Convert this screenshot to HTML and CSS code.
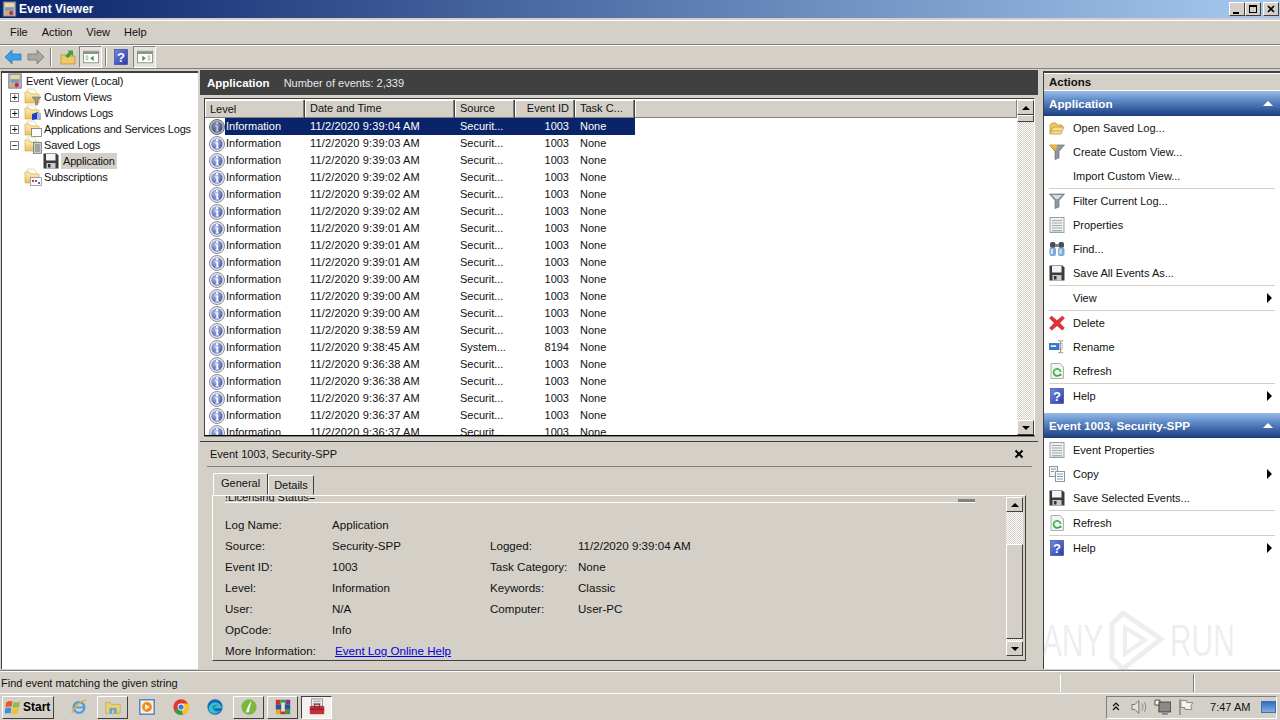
FILE: index.html
```html
<!DOCTYPE html>
<html lang="en">
<head>
    <meta charset="UTF-8">
    <title>Event Viewer</title>
    <link rel="stylesheet" href="styles.css">
</head>
<body>
<svg class="defs" width="0" height="0">
    <defs>
        <radialGradient id="g-info" cx="0.4" cy="0.35" r="0.7"><stop offset="0" stop-color="#b9c6ee"/><stop offset="1" stop-color="#3f55a8"/></radialGradient>
        <linearGradient id="g-folder" x1="0" y1="0" x2="0" y2="1"><stop offset="0" stop-color="#fff3b8"/><stop offset="1" stop-color="#e8bf5c"/></linearGradient>
        <linearGradient id="g-help" x1="0" y1="0" x2="1" y2="1"><stop offset="0" stop-color="#6f88e4"/><stop offset="1" stop-color="#2a3ca4"/></linearGradient>

        <symbol id="i-info" viewBox="0 0 16 16">
            <circle cx="8" cy="8" r="7.5" fill="#e8e8ec" stroke="#8a8e98"/>
            <circle cx="8" cy="8" r="5.6" fill="url(#g-info)"/>
            <rect x="7" y="3.2" width="2.2" height="2" fill="#fff"/>
            <path d="M6.4 6.4h2.8v5h1v1.2H6.4v-1.2h1v-3.8h-1z" fill="#fff"/>
        </symbol>
        <symbol id="i-floppy" viewBox="0 0 16 16">
            <path d="M0.5 0.5h13l2 2v13h-15z" fill="#3b3b3b"/>
            <rect x="3" y="1" width="9.5" height="6.5" fill="#f4f4f4"/>
            <rect x="3.5" y="10" width="9" height="5.5" fill="#c9c9c9"/>
            <rect x="5" y="11" width="2.5" height="3.5" fill="#333"/>
        </symbol>
        <symbol id="i-folder" viewBox="0 0 18 18">
            <path d="M3 1h7l2 2v6H3z" fill="#fbfaf2" stroke="#d6cfa8" stroke-width="0.6"/>
            <path d="M1 15V4h4l1 2h9v9z" fill="url(#g-folder)" stroke="#d2ab52" stroke-width="0.7"/>
        </symbol>
        <symbol id="i-root" viewBox="0 0 16 18">
            <rect x="1" y="1" width="14" height="16" fill="#b4bccb" stroke="#6b7488"/>
            <rect x="3" y="2.500" width="10" height="4" fill="#f0dc90"/>
            <path d="M3 8h10M3 10h10" stroke="#5d76a8"/>
            <rect x="3" y="11.500" width="4" height="4" fill="#d8b050"/>
            <circle cx="10" cy="13.500" r="2.500" fill="#c8303c"/>
        </symbol>
        <symbol id="i-funnel" viewBox="0 0 16 16">
            <path d="M0.5 1h15L10 7.5V14l-4 1.5V7.5z" fill="#8d99a8" stroke="#5c6670" stroke-width="0.6"/>
            <path d="M3 2h10L9 6H7z" fill="#d7dee6"/>
        </symbol>
        <symbol id="i-funnel-new" viewBox="0 0 16 16">
            <path d="M0.5 1h15L10 7.5V14l-4 1.5V7.5z" fill="#8d99a8" stroke="#5c6670" stroke-width="0.6"/>
            <path d="M0.5 1h8L7 6.5 4.5 5z" fill="#f8b616"/>
        </symbol>
        <symbol id="i-props" viewBox="0 0 16 16">
            <rect x="1" y="0.5" width="14" height="15" fill="#eef0f2" stroke="#9aa0a8"/>
            <path d="M3 3.500h10M3 6h10M3 8.500h10M3 11h10" stroke="#a4aab2"/>
            <rect x="3" y="13" width="10" height="1.500" fill="#8fc0a0"/>
        </symbol>
        <symbol id="i-find" viewBox="0 0 16 16">
            <rect x="1" y="1" width="5.500" height="6" rx="2" fill="#4a4f5a"/>
            <rect x="9.500" y="1" width="5.500" height="6" rx="2" fill="#4a4f5a"/>
            <rect x="6" y="3" width="4" height="3" fill="#7b808a"/>
            <rect x="0.500" y="6.500" width="6.500" height="8.500" rx="2" fill="#7fa9d6"/>
            <rect x="9" y="6.500" width="6.500" height="8.500" rx="2" fill="#7fa9d6"/>
            <rect x="2" y="8" width="2" height="5" fill="#d6e4f2"/>
            <rect x="10.500" y="8" width="2" height="5" fill="#d6e4f2"/>
        </symbol>
        <symbol id="i-delete" viewBox="0 0 16 16">
            <path d="M2.500 1L8 5.500 13.500 1 15.500 3.200 10.800 8l4.700 5-2.200 2.200L8 10.800 2.800 15.200.5 13l4.800-5L.5 3.200z" fill="#e2303a" stroke="#b41c26" stroke-width="0.4"/>
        </symbol>
        <symbol id="i-rename" viewBox="0 0 18 16">
            <rect x="0.500" y="4" width="11" height="7" fill="#2f78d0" stroke="#1f4f90" stroke-width="0.6"/>
            <rect x="2" y="6" width="6" height="2" fill="#e8f0fa"/>
            <rect x="11.500" y="4" width="3.500" height="7" fill="#fff" stroke="#9a9a9a" stroke-width="0.5"/>
            <path d="M10.500 1h2l.7.7.7-.7h2M13.200 1.500v12.500M10.500 14.500h2l.7-.7.7.7h2" fill="none" stroke="#8a7358"/>
        </symbol>
        <symbol id="i-refresh" viewBox="0 0 16 16">
            <path d="M2 .5h9l3.500 3.500v11.500H2z" fill="#f3f5f3" stroke="#a8b0a8"/>
            <path d="M10.600 11.800A3.500 3.500 0 1 1 11.600 9" fill="none" stroke="#3db04e" stroke-width="1.700"/>
            <path d="M12.800 13l-3.800-.2 2.800-2.800z" fill="#3db04e"/>
        </symbol>
        <symbol id="i-help" viewBox="0 0 16 16">
            <rect x="1.500" y="0.500" width="13" height="15" fill="url(#g-help)" stroke="#2a3c98" stroke-width="0.6"/>
            <text x="8" y="13" class="help-mark" text-anchor="middle">?</text>
        </symbol>
        <symbol id="i-copy" viewBox="0 0 16 16">
            <rect x="0.500" y="0.500" width="8" height="10" fill="#f2f4f6" stroke="#8f959c"/>
            <rect x="6.500" y="5.500" width="9" height="10" fill="#fff" stroke="#8f959c"/>
            <path d="M2 3h5M2 5.500h3M8 8h6M8 10.500h6M8 13h6" stroke="#7f9ab8"/>
        </symbol>
        <symbol id="i-open" viewBox="0 0 16 16">
            <path d="M1 14V5l2-2h4l1 2h5v2" fill="#f0c868" stroke="#b98a2c" stroke-width="0.7"/>
            <path d="M1 14l3-7h11l-3 7z" fill="#f8dc90" stroke="#b98a2c" stroke-width="0.7"/>
            <path d="M3 11h9" stroke="#d3a44a"/>
        </symbol>
    </defs>
</svg>

<div class="window">
    <header class="titlebar">
        <svg class="title-ico"><use href="#i-root"/></svg>
        <span class="title-text">Event Viewer</span>
        <div class="win-btns">
            <button class="win-btn"><span class="glyph-min"></span></button>
            <button class="win-btn"><span class="glyph-restore"></span></button>
            <button class="win-btn win-close"><svg class="glyph-x" viewBox="0 0 8 8"><path d="M1 1l6 6M7 1L1 7" stroke="#000" stroke-width="1.600"/></svg></button>
        </div>
    </header>

    <nav class="menubar">
        <span>File</span><span>Action</span><span>View</span><span>Help</span>
    </nav>

    <div class="toolbar">
        <svg class="tool-arrow" viewBox="0 0 18 16"><path d="M1 8l7-7v4h9v6H8v4z" fill="#3aa0e8" stroke="#2a78c0" stroke-width="0.8"/></svg>
        <svg class="tool-arrow" viewBox="0 0 18 16"><path d="M17 8l-7-7v4H1v6h9v4z" fill="#a8a8a0" stroke="#77776f" stroke-width="0.8"/></svg>
        <i class="tool-sep"></i>
        <svg class="tool-ico tool-up" viewBox="0 0 16 16"><path d="M1 15V6h5l1 1h8v8z" fill="#f0c868" stroke="#b98a2c" stroke-width="0.7"/><path d="M5 7l4-4-1.500-1.500H13v5.500l-1.500-1.500-3.500 3.500z" fill="#3f9f3a"/></svg>
        <span class="tool-toggle"><svg class="tool-ico" viewBox="0 0 18 16"><rect x="0.500" y="1.500" width="17" height="13" fill="#fff" stroke="#8a8a8a"/><rect x="1" y="2" width="16" height="2.500" fill="#8a8a8a"/><path d="M3 7h3M3 9h3M3 11h3" stroke="#7fa77f"/><path d="M12 6.500v6l-4-3z" fill="#3f9f3a"/></svg></span>
        <i class="tool-sep"></i>
        <svg class="tool-ico tool-help"><use href="#i-help"/></svg>
        <span class="tool-toggle"><svg class="tool-ico" viewBox="0 0 18 16"><rect x="0.500" y="1.500" width="17" height="13" fill="#fff" stroke="#8a8a8a"/><rect x="1" y="2" width="16" height="2.500" fill="#8a8a8a"/><path d="M12 7h3M12 9h3M12 11h3" stroke="#7fa77f"/><path d="M6 6.500v6l4-3z" fill="#3f9f3a"/></svg></span>
    </div>

    <main class="workspace">
        <aside class="tree">
            <div class="tree-row tree-root">
                <svg class="root-ico"><use href="#i-root"/></svg>
                <span>Event Viewer (Local)</span>
            </div>
            <div class="tree-row"><i class="expander">+</i>
                <svg class="folder" viewBox="0 0 18 18"><use href="#i-folder" width="18" height="18"/><path d="M8 9h9l-3.500 4v4h-2v-4z" fill="#8f9a8a" stroke="#5f6a5a" stroke-width="0.5"/></svg>
                <span>Custom Views</span></div>
            <div class="tree-row"><i class="expander">+</i>
                <svg class="folder" viewBox="0 0 18 18"><use href="#i-folder" width="18" height="18"/><path d="M8 10l6-2v7l-6 1z" fill="#1a3fc8"/><rect x="13" y="9" width="4" height="7" fill="#a8b4d0"/></svg>
                <span>Windows Logs</span></div>
            <div class="tree-row"><i class="expander">+</i>
                <svg class="folder" viewBox="0 0 18 18"><use href="#i-folder" width="18" height="18"/><rect x="7.500" y="8.500" width="10" height="8" fill="#fbfbfb" stroke="#77787c" stroke-width="0.8"/></svg>
                <span>Applications and Services Logs</span></div>
            <div class="tree-row"><i class="expander">−</i>
                <svg class="folder" viewBox="0 0 18 18"><use href="#i-folder" width="18" height="18"/><rect x="9.500" y="6.500" width="8" height="11" fill="#c8cacc" stroke="#77787c" stroke-width="0.8"/><path d="M11 9h5M11 11h5M11 13h5M11 15h5" stroke="#7a7c80"/></svg>
                <span>Saved Logs</span></div>
            <div class="tree-row tree-leaf">
                <svg class="ico"><use href="#i-floppy"/></svg>
                <span class="tree-current">Application</span>
            </div>
            <div class="tree-row tree-sub">
                <svg class="folder" viewBox="0 0 18 18"><use href="#i-folder" width="18" height="18"/><rect x="6.500" y="9.500" width="11" height="8" fill="#fbfbfb" stroke="#9090a8" stroke-width="0.8"/><rect x="8" y="12" width="2" height="2" fill="#c83a3a"/><rect x="11" y="12" width="2" height="2" fill="#4a6ad0"/><rect x="14" y="14" width="2" height="2" fill="#4a6ad0"/></svg>
                <span>Subscriptions</span></div>
        </aside>

        <section class="center">
            <div class="log-head"><b>Application</b><span>Number of events: 2,339</span></div>

            <div class="events">
                <div class="events-main">
                    <div class="grid-head">
                        <span class="col-level">Level</span>
                        <span class="col-date">Date and Time</span>
                        <span class="col-source">Source</span>
                        <span class="col-id">Event ID</span>
                        <span class="col-task">Task C...</span>
                        <span class="col-rest"></span>
                    </div>
                    <div class="grid-body">
                        <div class="event selected"><div class="col-level"><svg class="ico"><use href="#i-info"/></svg><span>Information</span></div><span class="col-date">11/2/2020 9:39:04 AM</span><span class="col-source">Securit...</span><span class="col-id">1003</span><span class="col-task">None</span></div>
                        <div class="event"><div class="col-level"><svg class="ico"><use href="#i-info"/></svg><span>Information</span></div><span class="col-date">11/2/2020 9:39:03 AM</span><span class="col-source">Securit...</span><span class="col-id">1003</span><span class="col-task">None</span></div>
                        <div class="event"><div class="col-level"><svg class="ico"><use href="#i-info"/></svg><span>Information</span></div><span class="col-date">11/2/2020 9:39:03 AM</span><span class="col-source">Securit...</span><span class="col-id">1003</span><span class="col-task">None</span></div>
                        <div class="event"><div class="col-level"><svg class="ico"><use href="#i-info"/></svg><span>Information</span></div><span class="col-date">11/2/2020 9:39:02 AM</span><span class="col-source">Securit...</span><span class="col-id">1003</span><span class="col-task">None</span></div>
                        <div class="event"><div class="col-level"><svg class="ico"><use href="#i-info"/></svg><span>Information</span></div><span class="col-date">11/2/2020 9:39:02 AM</span><span class="col-source">Securit...</span><span class="col-id">1003</span><span class="col-task">None</span></div>
                        <div class="event"><div class="col-level"><svg class="ico"><use href="#i-info"/></svg><span>Information</span></div><span class="col-date">11/2/2020 9:39:02 AM</span><span class="col-source">Securit...</span><span class="col-id">1003</span><span class="col-task">None</span></div>
                        <div class="event"><div class="col-level"><svg class="ico"><use href="#i-info"/></svg><span>Information</span></div><span class="col-date">11/2/2020 9:39:01 AM</span><span class="col-source">Securit...</span><span class="col-id">1003</span><span class="col-task">None</span></div>
                        <div class="event"><div class="col-level"><svg class="ico"><use href="#i-info"/></svg><span>Information</span></div><span class="col-date">11/2/2020 9:39:01 AM</span><span class="col-source">Securit...</span><span class="col-id">1003</span><span class="col-task">None</span></div>
                        <div class="event"><div class="col-level"><svg class="ico"><use href="#i-info"/></svg><span>Information</span></div><span class="col-date">11/2/2020 9:39:01 AM</span><span class="col-source">Securit...</span><span class="col-id">1003</span><span class="col-task">None</span></div>
                        <div class="event"><div class="col-level"><svg class="ico"><use href="#i-info"/></svg><span>Information</span></div><span class="col-date">11/2/2020 9:39:00 AM</span><span class="col-source">Securit...</span><span class="col-id">1003</span><span class="col-task">None</span></div>
                        <div class="event"><div class="col-level"><svg class="ico"><use href="#i-info"/></svg><span>Information</span></div><span class="col-date">11/2/2020 9:39:00 AM</span><span class="col-source">Securit...</span><span class="col-id">1003</span><span class="col-task">None</span></div>
                        <div class="event"><div class="col-level"><svg class="ico"><use href="#i-info"/></svg><span>Information</span></div><span class="col-date">11/2/2020 9:39:00 AM</span><span class="col-source">Securit...</span><span class="col-id">1003</span><span class="col-task">None</span></div>
                        <div class="event"><div class="col-level"><svg class="ico"><use href="#i-info"/></svg><span>Information</span></div><span class="col-date">11/2/2020 9:38:59 AM</span><span class="col-source">Securit...</span><span class="col-id">1003</span><span class="col-task">None</span></div>
                        <div class="event"><div class="col-level"><svg class="ico"><use href="#i-info"/></svg><span>Information</span></div><span class="col-date">11/2/2020 9:38:45 AM</span><span class="col-source">System...</span><span class="col-id">8194</span><span class="col-task">None</span></div>
                        <div class="event"><div class="col-level"><svg class="ico"><use href="#i-info"/></svg><span>Information</span></div><span class="col-date">11/2/2020 9:36:38 AM</span><span class="col-source">Securit...</span><span class="col-id">1003</span><span class="col-task">None</span></div>
                        <div class="event"><div class="col-level"><svg class="ico"><use href="#i-info"/></svg><span>Information</span></div><span class="col-date">11/2/2020 9:36:38 AM</span><span class="col-source">Securit...</span><span class="col-id">1003</span><span class="col-task">None</span></div>
                        <div class="event"><div class="col-level"><svg class="ico"><use href="#i-info"/></svg><span>Information</span></div><span class="col-date">11/2/2020 9:36:37 AM</span><span class="col-source">Securit...</span><span class="col-id">1003</span><span class="col-task">None</span></div>
                        <div class="event"><div class="col-level"><svg class="ico"><use href="#i-info"/></svg><span>Information</span></div><span class="col-date">11/2/2020 9:36:37 AM</span><span class="col-source">Securit...</span><span class="col-id">1003</span><span class="col-task">None</span></div>
                        <div class="event"><div class="col-level"><svg class="ico"><use href="#i-info"/></svg><span>Information</span></div><span class="col-date">11/2/2020 9:36:37 AM</span><span class="col-source">Securit...</span><span class="col-id">1003</span><span class="col-task">None</span></div>
                    </div>
                </div>
                <div class="vscroll vscroll-events">
                    <button class="sb-btn"><i class="arrow-up"></i></button>
                    <div class="sb-thumb sb-thumb-small"></div>
                    <div class="sb-track"></div>
                    <button class="sb-btn"><i class="arrow-down"></i></button>
                </div>
            </div>

            <div class="detail">
                <div class="detail-head"><span>Event 1003, Security-SPP</span><svg class="detail-close" viewBox="0 0 10 10"><path d="M1.500 1.500l7 7M8.500 1.500l-7 7" stroke="#000" stroke-width="2"/></svg></div>
                <div class="tabs">
                    <span class="tab tab-active">General</span>
                    <span class="tab">Details</span>
                </div>
                <div class="tab-page">
                    <div class="tab-content">
                        <div class="desc-clip">
                            <span class="desc-text">!Licensing Status=</span>
                            <i class="desc-grip"></i>
                        </div>
                        <div class="fields">
                            <span>Log Name:</span><span class="span-3">Application</span>
                            <span>Source:</span><span>Security-SPP</span><span>Logged:</span><span>11/2/2020 9:39:04 AM</span>
                            <span>Event ID:</span><span>1003</span><span>Task Category:</span><span>None</span>
                            <span>Level:</span><span>Information</span><span>Keywords:</span><span>Classic</span>
                            <span>User:</span><span>N/A</span><span>Computer:</span><span>User-PC</span>
                            <span>OpCode:</span><span class="span-3">Info</span>
                            <span>More Information:</span><a class="span-3 help-link">Event Log Online Help</a>
                        </div>
                    </div>
                    <div class="vscroll vscroll-detail">
                        <button class="sb-btn"><i class="arrow-up"></i></button>
                        <div class="sb-track sb-track-top"></div>
                        <div class="sb-thumb sb-thumb-big"></div>
                        <div class="sb-track sb-track-end"></div>
                        <button class="sb-btn"><i class="arrow-down"></i></button>
                    </div>
                </div>
            </div>
        </section>

        <aside class="actions">
            <div class="actions-title">Actions</div>
            <div class="action-head"><span>Application</span><i class="collapse"></i></div>
            <div class="action"><svg class="ico"><use href="#i-open"/></svg><span>Open Saved Log...</span></div>
            <div class="action"><svg class="ico"><use href="#i-funnel-new"/></svg><span>Create Custom View...</span></div>
            <div class="action"><span class="no-ico">Import Custom View...</span></div>
            <hr class="action-sep">
            <div class="action"><svg class="ico"><use href="#i-funnel"/></svg><span>Filter Current Log...</span></div>
            <div class="action"><svg class="ico"><use href="#i-props"/></svg><span>Properties</span></div>
            <div class="action"><svg class="ico"><use href="#i-find"/></svg><span>Find...</span></div>
            <div class="action"><svg class="ico"><use href="#i-floppy"/></svg><span>Save All Events As...</span></div>
            <hr class="action-sep">
            <div class="action"><span class="no-ico">View</span><i class="more"></i></div>
            <hr class="action-sep">
            <div class="action"><svg class="ico"><use href="#i-delete"/></svg><span>Delete</span></div>
            <div class="action"><svg class="ico"><use href="#i-rename"/></svg><span>Rename</span></div>
            <div class="action"><svg class="ico"><use href="#i-refresh"/></svg><span>Refresh</span></div>
            <hr class="action-sep">
            <div class="action"><svg class="ico"><use href="#i-help"/></svg><span>Help</span><i class="more"></i></div>
            <div class="action-head action-head-second"><span>Event 1003, Security-SPP</span><i class="collapse"></i></div>
            <div class="action"><svg class="ico"><use href="#i-props"/></svg><span>Event Properties</span></div>
            <div class="action"><svg class="ico"><use href="#i-copy"/></svg><span>Copy</span><i class="more"></i></div>
            <div class="action"><svg class="ico"><use href="#i-floppy"/></svg><span>Save Selected Events...</span></div>
            <hr class="action-sep">
            <div class="action"><svg class="ico"><use href="#i-refresh"/></svg><span>Refresh</span></div>
            <hr class="action-sep">
            <div class="action"><svg class="ico"><use href="#i-help"/></svg><span>Help</span><i class="more"></i></div>
        </aside>
    </main>

    <footer class="statusbar">
        <span class="status-main">Find event matching the given string</span>
        <span class="status-cell status-mid"></span>
        <span class="status-cell status-end"></span>
    </footer>
</div>

<div class="taskbar">
    <button class="start">
        <svg class="start-logo" viewBox="0 0 16 16"><path d="M1 3.500C3 2 5 1.500 7.500 2.500L6.500 8C4.500 7 2.500 7.500 0.500 8.500z" fill="#e8582c"/><path d="M8.500 2.800c2 1 4 1 6.500-.3L14 8c-2.500 1-4.500 1-6.500.2z" fill="#8cc040"/><path d="M0.300 9.500c2-1 4-1.500 6-.5L5.500 14.500c-2-1-4-.5-6 .5z" fill="#3c8ce0"/><path d="M7.300 9.300c2 .8 4 .8 6.500-.2l-1 5.500c-2.500 1-4.500 1-6.500.2z" fill="#f0c028"/></svg>
        <span>Start</span>
    </button>
    <div class="quick">
        <span class="task"><svg viewBox="0 0 20 20"><circle cx="10" cy="10.500" r="6" fill="none" stroke="#4a9ce0" stroke-width="2.400"/><path d="M4 10.500h12" stroke="#4a9ce0" stroke-width="2"/><path d="M2 17C4 9 12 3 18 2" fill="none" stroke="#e8b030" stroke-width="1.400"/></svg></span>
        <span class="task task-up"><svg viewBox="0 0 20 20"><path d="M2 17V5h5l1 2h10v10z" fill="#f0d070" stroke="#b99a40" stroke-width="0.7"/><rect x="6" y="11" width="8" height="6" fill="#58a8d8"/><rect x="9" y="13" width="2" height="4" fill="#f0d070"/></svg></span>
        <span class="task"><svg viewBox="0 0 20 20"><rect x="2" y="2" width="16" height="16" fill="#fdf0d8" stroke="#3a78c8" stroke-width="1.400"/><circle cx="10" cy="10" r="5.500" fill="#f08a1c"/><path d="M8 7l5 3-5 3z" fill="#fff"/></svg></span>
        <span class="task"><svg viewBox="0 0 20 20"><circle cx="10" cy="10" r="8.500" fill="#e0392c"/><path d="M10 10L2.700 14.500A8.500 8.500 0 0 0 12 18.300z" fill="#2f9e44"/><path d="M10 10l2 8.300A8.500 8.500 0 0 0 18 6H10z" fill="#f7c51c"/><circle cx="10" cy="10" r="3.800" fill="#fff"/><circle cx="10" cy="10" r="2.900" fill="#3a78e0"/></svg></span>
        <span class="task"><svg viewBox="0 0 20 20"><circle cx="10" cy="10" r="8.500" fill="#1469b8"/><path d="M3 11C4 6 9 4 13 5.500c3 1 4.500 3.500 4.500 6H8c0 3 4 4.500 8 2.500-2 3-7 4.500-10 2.500C3.500 15 2.800 13 3 11z" fill="#36c0c8"/><path d="M7 10.500c1-3 5-4 8-2-3-1-5 0-6 2z" fill="#1469b8"/></svg></span>
        <span class="task task-up"><svg viewBox="0 0 20 20"><circle cx="10" cy="10" r="8.500" fill="#7cb840"/><path d="M13 3C9.500 7 8 11 6.500 16.500c3-1.500 6-1.500 8.500-1.500-2 0-3.500 0-5 .2C10.500 11 11.500 7 13 3z" fill="#fff"/></svg></span>
        <span class="task task-up"><svg viewBox="0 0 20 20"><rect x="2" y="2" width="5" height="5" fill="#c83030"/><rect x="7" y="2" width="6" height="5" fill="#2f9e44"/><rect x="13" y="2" width="5" height="5" fill="#8a2f90"/><rect x="2" y="7" width="16" height="6" fill="#2f4f9e"/><rect x="2" y="13" width="5" height="5" fill="#e0b020"/><rect x="7" y="13" width="6" height="5" fill="#c83030"/><rect x="13" y="13" width="5" height="5" fill="#2f9e44"/><rect x="8" y="5" width="4" height="10" fill="#f0e0c0"/></svg></span>
        <span class="task task-active"><svg viewBox="0 0 20 20"><rect x="4" y="1" width="12" height="8" fill="#f2f2f2" stroke="#8a8a90"/><path d="M6 3.500h8M6 6h8" stroke="#8a8a90"/><rect x="2" y="9" width="16" height="9" fill="#c0303a"/><rect x="7" y="7" width="6" height="3" fill="none" stroke="#801c24"/><rect x="2" y="12" width="16" height="1" fill="#801c24"/></svg></span>
    </div>
    <div class="tray">
        <svg class="tray-chevron" viewBox="0 0 8 10"><path d="M1 4l3-3 3 3M1 8l3-3 3 3" fill="none" stroke="#111" stroke-width="1.300"/></svg>
        <svg class="tray-ico" viewBox="0 0 18 16"><path d="M2 5.500h3l4-4v13l-4-4H2z" fill="#e6e4de" stroke="#77756e"/><path d="M12 4.500c1.500 2 1.500 5 0 7M14.500 3c2 3 2 7 0 10" fill="none" stroke="#8a8880"/></svg>
        <svg class="tray-ico" viewBox="0 0 18 16"><path d="M1 1h5v5H1z" fill="#fff" stroke="#444"/><rect x="5" y="3" width="12" height="10" fill="#8a8a88" stroke="#444"/><path d="M8 15h6" stroke="#444"/></svg>
        <svg class="tray-ico" viewBox="0 0 18 16"><path d="M3 0v16" stroke="#77756e" stroke-width="1.200"/><path d="M4 1.500h6v2h6l-2 4 1 3H8v-2H4z" fill="#f4f4f0" stroke="#8a8880"/></svg>
        <span class="tray-time">7:47 AM</span>
        <i class="show-desktop"></i>
    </div>
</div>

<div class="watermark">
    <span class="wm-word">ANY</span>
    <svg class="wm-play" viewBox="0 0 56 62"><path d="M3 14L14 3l38 26-38 30L3 48z" fill="none" stroke="currentColor" stroke-width="5"/><path d="M16 18l20 12-20 14z" fill="none" stroke="currentColor" stroke-width="4"/></svg>
    <span class="wm-word">RUN</span>
</div>
</body>
</html>
```

FILE: styles.css
```css
:root {
    --face: #d4d0c8;
    --light: #ffffff;
    --shadow: #808080;
    --dark: #404040;
    --navy: #0a246a;
    --ui-font: "Liberation Sans", Arial, sans-serif;
}

* {
    box-sizing: border-box;
}

html, body {
    margin: 0;
    height: 720px;
    overflow: hidden;
}

body {
    font-family: var(--ui-font);
    font-size: 11px;
    color: #111;
    background-color: var(--face);
    display: flex;
    flex-direction: column;
}

.defs {
    position: absolute;
}

.help-mark {
    font: bold 13px var(--ui-font);
    fill: #fff;
}

.ico {
    width: 16px;
    height: 16px;
    flex: none;
}

.window {
    flex: 1;
    min-height: 0;
    display: flex;
    flex-direction: column;
}

/* title bar */
.titlebar {
    height: 18px;
    display: flex;
    align-items: center;
    padding: 0 1px 0 2px;
    background: linear-gradient(to right, #0a246a, #a6caf0);
    color: #fff;
    font-size: 12px;
    font-weight: bold;
}

.title-ico {
    width: 15px;
    height: 16px;
    margin-right: 2px;
}

.title-text {
    flex: 1;
}

.win-btns {
    display: flex;
}

.win-btn {
    width: 16px;
    height: 14px;
    padding: 0;
    margin: 0;
    border: 1px solid;
    border-color: #fff #404040 #404040 #fff;
    background-color: var(--face);
    display: flex;
    align-items: center;
    justify-content: center;
}

.win-close {
    margin-left: 2px;
}

.glyph-x {
    width: 8px;
    height: 8px;
}

.glyph-min {
    width: 6px;
    height: 2px;
    margin-top: 7px;
    margin-right: 3px;
    background-color: #000;
}

.glyph-restore {
    width: 8px;
    height: 8px;
    border: 1px solid #000;
    border-top-width: 2px;
}

/* menu and toolbar */
.menubar {
    height: 25px;
    margin-top: 2px;
    padding-bottom: 2px;
    border-top: 1px solid var(--light);
    display: flex;
    align-items: center;
    gap: 14px;
    padding-left: 10px;
    border-bottom: 1px solid var(--shadow);
}

.toolbar {
    height: 24px;
    display: flex;
    align-items: center;
    padding-left: 4px;
    border-top: 1px solid var(--light);
    border-bottom: 1px solid var(--shadow);
}

.tool-arrow {
    width: 18px;
    height: 16px;
    margin-right: 5px;
}

.tool-sep {
    width: 2px;
    height: 18px;
    margin-right: 6px;
    border-left: 1px solid var(--shadow);
    border-right: 1px solid var(--light);
}

.tool-ico {
    width: 16px;
    height: 16px;
    flex: none;
}

.tool-up {
    margin-left: 2px;
}

.tool-toggle {
    width: 23px;
    height: 22px;
    margin: 0 3px;
    display: flex;
    align-items: center;
    justify-content: center;
    border: 1px solid;
    border-color: #808080 #fff #fff #808080;
    background-color: #e6e3dd;
}

.tool-help {
    margin-right: 1px;
}

/* main panes */
.workspace {
    flex: 1;
    min-height: 0;
    margin-top: 1px;
    display: flex;
}

.tree {
    width: 197px;
    margin-left: 1px;
    margin-top: 1px;
    background-color: #fff;
    border-top: 2px solid var(--dark);
    border-left: 1px solid var(--dark);
    letter-spacing: -0.2px;
}

.tree-row {
    height: 16px;
    display: flex;
    align-items: center;
    padding-left: 7px;
}

.root-ico {
    width: 16px;
    height: 16px;
    margin-left: -2px;
    flex: none;
}

.tree-root span {
    margin-left: 3px;
}

.expander {
    width: 9px;
    height: 9px;
    margin-left: 1px;
    border: 1px solid #808080;
    font: normal 10px/7px var(--ui-font);
    text-align: center;
    color: #000;
}

.folder {
    width: 18px;
    height: 18px;
    margin: 0 2px 0 5px;
    flex: none;
}

.tree-leaf {
    padding-left: 41px;
}

.tree-current {
    margin-left: 2px;
    padding: 0 2px;
    line-height: 16px;
    background-color: #d4d0c8;
}

.tree-sub {
    padding-left: 17px;
}

.center {
    width: 838px;
    margin-left: 2px;
    display: flex;
    flex-direction: column;
}

.log-head {
    height: 25px;
    flex: none;
    display: flex;
    align-items: center;
    gap: 14px;
    padding-left: 7px;
    background-color: var(--dark);
    color: #e8e8e8;
}

.log-head b {
    color: #fff;
    font-size: 11.5px;
}

.events {
    height: 338px;
    margin: 3px 3px 0 4px;
    flex: none;
    display: flex;
    border: 1px solid;
    border-color: #404040 #fff #000 #404040;
    background-color: #fff;
    box-shadow: 0 1px 0 #808080;
}

.events-main {
    flex: 1;
    min-width: 0;
    overflow: hidden;
}

.grid-head {
    height: 18px;
    display: flex;
    background-color: var(--face);
    margin-top: 1px;
}

.grid-head span {
    padding-left: 5px;
    line-height: 16px;
    border-right: 1px solid var(--dark);
    box-shadow: inset -1px -1px 0 var(--shadow), inset 1px 1px 0 #fff;
}

.grid-head .col-id {
    text-align: right;
    padding-right: 5px;
}

.grid-head .col-rest {
    flex: 1;
    border-right: none;
}

.grid-body {
    height: 318px;
    overflow: hidden;
}

.event {
    height: 17px;
    line-height: 17px;
    display: flex;
    width: 430px;
}

.event .col-date {
    letter-spacing: 0.15px;
}

.event .col-id {
    padding-right: 6px;
}

.col-level {
    width: 100px;
    flex: none;
    display: flex;
    align-items: center;
}

.event .col-level {
    padding-left: 4px;
}

.event .col-level span {
    flex: 1;
    padding-left: 1px;
}

.col-date {
    width: 150px;
    flex: none;
    padding-left: 5px;
}

.col-source {
    width: 60px;
    flex: none;
    padding-left: 5px;
}

.col-id {
    width: 60px;
    flex: none;
    padding-right: 5px;
    text-align: right;
}

.col-task {
    width: 60px;
    flex: none;
    padding-left: 5px;
}

.selected {
    color: #fff;
}

.selected > span,
.selected .col-level span {
    background-color: var(--navy);
}

.selected .ico {
    filter: brightness(0.78);
}

/* scrollbars */
.vscroll {
    width: 17px;
    flex: none;
    display: flex;
    flex-direction: column;
}

.sb-btn {
    height: 15px;
    padding: 0;
    flex: none;
    border: 1px solid;
    border-color: #fff #404040 #404040 #fff;
    background-color: var(--face);
    display: flex;
    align-items: center;
    justify-content: center;
}

.arrow-up, .arrow-down {
    width: 0;
    height: 0;
    border-left: 4px solid transparent;
    border-right: 4px solid transparent;
}

.arrow-up {
    border-bottom: 4px solid #000;
}

.arrow-down {
    border-top: 4px solid #000;
}

.sb-track {
    flex: 1;
    background: repeating-conic-gradient(#fff 0 25%, #d4d0c8 0 50%) 0 0 / 2px 2px;
}

.sb-thumb {
    flex: none;
    background-color: var(--face);
    border: 1px solid;
    border-color: #fff #404040 #404040 #fff;
}

.sb-thumb-small {
    height: 7px;
}

.sb-thumb-big {
    height: 95px;
}

.vscroll-events {
    padding-top: 1px;
}

.sb-track-top {
    flex: none;
    height: 32px;
}

.sb-track-end {
    flex: none;
    height: 2px;
}

/* detail pane */
.detail {
    flex: 1;
    min-height: 0;
    margin-top: 5px;
    border-top: 1px solid var(--dark);
    display: flex;
    flex-direction: column;
}

.detail-head {
    height: 25px;
    margin: 0 6px 0 7px;
    flex: none;
    display: flex;
    align-items: center;
    justify-content: space-between;
    padding: 0 8px 0 3px;
    border-bottom: 1px solid var(--shadow);
}

.detail-close {
    width: 10px;
    height: 10px;
}

.tabs {
    height: 22px;
    flex: none;
    margin: 6px 0 0 13px;
    display: flex;
    align-items: flex-end;
}

.tab {
    height: 20px;
    padding: 3px 5px 0;
    border: 1px solid;
    border-color: #fff #404040 var(--face) #fff;
    border-radius: 2px 2px 0 0;
}

.tab-active {
    height: 22px;
    padding: 3px 7px 0;
}

.tab-page {
    height: 166px;
    margin: 0 12px;
    padding-left: 12px;
    display: flex;
    border-top: 1px solid #fff;
    border-left: 1px solid #fff;
    border-right: 1px solid var(--dark);
    border-bottom: 1px solid var(--dark);
}

.tab-content {
    flex: 1;
    min-width: 0;
    height: 163px;
    overflow: hidden;
}

.desc-clip {
    position: relative;
    width: 750px;
    height: 7px;
    overflow: hidden;
    border-bottom: 1px solid #fff;
}

.desc-text {
    display: block;
    line-height: 12px;
    margin-top: -5px;
}

.desc-grip {
    position: absolute;
    right: 0;
    top: 3px;
    width: 17px;
    height: 3px;
    background-color: var(--shadow);
}

.fields {
    margin-top: 11px;
    display: grid;
    grid-template-columns: 107px 158px 88px auto;
    grid-auto-rows: 21px;
    line-height: 21px;
    font-size: 11.6px;
}

.span-3 {
    grid-column: span 3;
}

.help-link {
    padding-left: 3px;
    color: #0000e0;
    text-decoration: underline;
}

.vscroll-detail {
    height: 159px;
    margin: 1px 2px 0 0;
}

/* actions */
.actions {
    width: 237px;
    margin-top: 1px;
    margin-left: 5px;
    padding-top: 1px;
    background-color: #fff;
    border-top: 2px solid var(--dark);
    border-left: 1px solid var(--dark);
}

.actions-title {
    height: 17px;
    padding-left: 5px;
    line-height: 17px;
    font-size: 11.5px;
    font-weight: bold;
    background-color: var(--face);
    border-bottom: 1px solid #fff;
}

.action-head {
    height: 25px;
    display: flex;
    align-items: center;
    justify-content: space-between;
    padding: 0 7px 0 5px;
    background: linear-gradient(to bottom, #97bce8, #5a86c4 40%, #1c3c80);
    color: #fff;
    font-size: 11.7px;
    font-weight: bold;
}

.action-head-second {
    margin-top: 5px;
}

.collapse {
    width: 0;
    height: 0;
    border-left: 5px solid transparent;
    border-right: 5px solid transparent;
    border-bottom: 5px solid #fff;
}

.action {
    height: 24px;
    display: flex;
    align-items: center;
    padding-left: 5px;
}

.action span {
    margin-left: 8px;
    flex: 1;
}

.action .no-ico {
    margin-left: 24px;
}

.more {
    width: 0;
    height: 0;
    margin-right: 8px;
    border-top: 5px solid transparent;
    border-bottom: 5px solid transparent;
    border-left: 5px solid #000;
}

.action-sep {
    height: 1px;
    margin: 0 5px;
    border: none;
    background-color: #d4d0c8;
}

/* status bar */
.statusbar {
    height: 23px;
    flex: none;
    margin-top: 2px;
    display: flex;
    align-items: center;
    border-top: 1px solid #fff;
    border-bottom: 1px solid #fff;
    box-shadow: 0 -1px 0 var(--shadow);
}

.status-main {
    width: 1060px;
    padding-left: 1px;
}

.status-cell {
    height: 18px;
    border-left: 1px solid #fff;
    border-right: 1px solid var(--shadow);
}

.status-mid {
    width: 134px;
}

.status-end {
    flex: 1;
    border-right: none;
}

/* taskbar */
.taskbar {
    height: 26px;
    flex: none;
    display: flex;
    align-items: center;
    padding: 0 3px 0 2px;
}

.start {
    width: 52px;
    height: 23px;
    padding: 0 0 0 2px;
    display: flex;
    align-items: center;
    gap: 2px;
    border: 1px solid;
    border-color: #fff #404040 #404040 #fff;
    background-color: var(--face);
    font: bold 12px var(--ui-font);
    color: #000;
}

.start-logo {
    width: 16px;
    height: 16px;
}

.quick {
    display: flex;
    margin-left: 9px;
    gap: 3px;
    flex: 1;
}

.task {
    width: 31px;
    height: 23px;
    display: flex;
    align-items: center;
    justify-content: center;
}

.task svg {
    width: 18px;
    height: 18px;
}

.task-up {
    border: 1px solid;
    border-color: #fff #404040 #404040 #fff;
}

.task-active {
    border: 1px solid;
    border-color: #404040 #fff #fff #404040;
    background-color: #f2f1ee;
}

.tray {
    width: 171px;
    height: 23px;
    display: flex;
    align-items: center;
    padding-left: 5px;
    border: 1px solid;
    border-color: #808080 #fff #fff #808080;
}

.tray-chevron {
    width: 8px;
    height: 10px;
    margin-right: 10px;
}

.tray-ico {
    width: 18px;
    height: 16px;
    margin-right: 6px;
}

.tray-time {
    width: 52px;
    margin-left: 9px;
}

.show-desktop {
    width: 15px;
    height: 12px;
    background: linear-gradient(to bottom, #2f6fc8, #80aee0);
    border: 1px solid #406ea8;
}

/* sandbox mark over the bottom right corner */
.watermark {
    position: absolute;
    left: 1042px;
    top: 610px;
    height: 62px;
    display: flex;
    align-items: center;
    gap: 5px;
    font: 44px/62px "Liberation Sans", sans-serif;
    color: rgba(170, 170, 170, 0.2);
    pointer-events: none;
}

.wm-word {
    width: 62px;
    transform: scaleX(0.68);
    transform-origin: left center;
    white-space: nowrap;
}

.wm-play {
    width: 56px;
    height: 62px;
}
```
